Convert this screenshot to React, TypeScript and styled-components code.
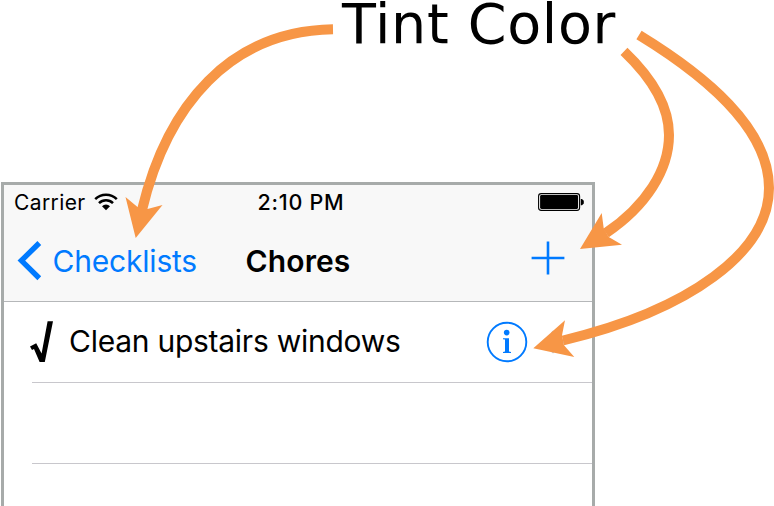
import React from "react";
import styled, { createGlobalStyle } from "styled-components";

const TINT = "#007aff";
const ARROW = "#f79646";

const GlobalStyle = createGlobalStyle`
  * { box-sizing: border-box; }
  body { margin: 0; background: #fff; }
`;

const Page = styled.main`
  position: relative;
  width: 774px;
  height: 506px;
  overflow: hidden;
  display: flex;
  flex-direction: column;
  align-items: flex-start;
  background: #fff;
  color: #000;
  font-family: Inter, "Liberation Sans", sans-serif;
`;

const Caption = styled.h1`
  flex: none;
  height: 182px;
  margin: 0 0 0 342px;
  font: 400 55.5px/48px "DejaVu Sans", sans-serif;
  letter-spacing: 0.7px;
  white-space: nowrap;
`;

const Phone = styled.section`
  flex: none;
  width: 594px;
  height: 324px;
  margin-left: 1px;
  border: 3px solid #a7abaa;
  border-bottom: 0;
  background: #fff;
`;

const Header = styled.header`
  height: 117px;
  background: #f8f8f8;
  border-bottom: 1px solid #b5b7b9;
`;

const StatusBar = styled.div`
  display: grid;
  grid-template-columns: 1fr auto 1fr;
  align-items: center;
  height: 34px;
  padding: 0 8px 0 10px;
`;

const Carrier = styled.div`
  display: flex;
  align-items: center;
  gap: 8.5px;
  font-size: 21px;
  letter-spacing: 0.4px;
`;

const Time = styled.div`
  position: relative;
  left: 2px;
  font-size: 21.5px;
  font-weight: 500;
  letter-spacing: 0.75px;
`;

const Battery = styled.svg`
  justify-self: end;
`;

const NavBar = styled.nav`
  display: grid;
  grid-template-columns: 1fr auto 1fr;
  align-items: center;
  height: 83px;
  padding: 0 13px;
`;

const BackButton = styled.button`
  display: flex;
  align-items: center;
  gap: 10.5px;
  padding: 0;
  border: 0;
  background: none;
  color: ${TINT};
  font: 400 30px/40px Inter, sans-serif;
  letter-spacing: -0.2px;
`;

const Title = styled.h2`
  margin: 0;
  font-size: 30px;
  line-height: 40px;
  font-weight: 600;
  letter-spacing: 0.1px;
`;

const AddButton = styled.button`
  display: flex;
  justify-self: end;
  margin: 0 14.5px 4.5px 0;
  padding: 0;
  border: 0;
  background: none;
  color: ${TINT};
`;

const List = styled.ul`
  margin: 0;
  padding: 0;
  list-style: none;
`;

const Row = styled.li`
  display: flex;
  align-items: center;
  height: 81px;
  margin-left: 28px;
  border-bottom: 1px solid #c8c7cc;
`;

const Check = styled.svg`
  flex: none;
  margin-left: -3px;
`;

const Label = styled.span`
  flex: 1;
  margin: 0 0 2px 15px;
  font-size: 30px;
  line-height: 40px;
  letter-spacing: -0.26px;
  white-space: nowrap;
`;

const Accessory = styled.svg`
  flex: none;
  margin-right: 26px;
`;

const Annotations = styled.svg`
  position: absolute;
  inset: 0;
  pointer-events: none;
`;

const arrows = [
  {
    shaft: "M333 29.3C230 31 167 105 142 210",
    head: "135.7,238 125.5,197 137.5,207 147.5,209 162.5,205",
  },
  {
    shaft: "M624 51.3C652 78 669 106 669 135C669 170 646 206 606 233",
    head: "580,249 601.7,213 603.7,228.3 608.7,237 622,244.7",
  },
  {
    shaft: "M639 35C706 76 769 128 769 188C769 252 690 310 563 340.5",
    head: "533.3,348.3 565,320.3 562,335.3 564,345.3 574.3,357",
  },
];

export default function App() {
  return (
    <>
      <GlobalStyle />
      <Page>
        <Caption>Tint Color</Caption>
        <Phone>
          <Header>
            <StatusBar>
              <Carrier>
                Carrier
                <svg width="24" height="18" viewBox="0 0 24 18" fill="none" stroke="#000" strokeWidth="2.5">
                  <path d="M1.2 6.2a15.3 15.3 0 0 1 21.6 0M5 10.1a9.9 9.9 0 0 1 14 0" />
                  <path d="M8 13.2a5.7 5.7 0 0 1 8 0L12 17.2Z" fill="#000" stroke="none" />
                </svg>
              </Carrier>
              <Time>2:10 PM</Time>
              <Battery width="46" height="18" viewBox="0 0 46 18">
                <rect x="0.6" y="0.6" width="41" height="16.8" rx="2.6" fill="#fff" stroke="#000" strokeWidth="1.1" />
                <rect x="2.1" y="2.1" width="38" height="13.8" rx="1.4" />
                <path d="M42.8 6h1.2l1.8 1.8v2.6L44 12.2h-1.2Z" />
              </Battery>
            </StatusBar>
            <NavBar>
              <BackButton>
                <svg width="25" height="40" viewBox="0 0 25 40" fill="none" stroke={TINT} strokeWidth="5.4">
                  <path d="M22.3 2 4.4 19.6 22.3 37.2" />
                </svg>
                Checklists
              </BackButton>
              <Title>Chores</Title>
              <AddButton aria-label="Add">
                <svg width="34" height="34" viewBox="0 0 34 34" fill="none" stroke="currentColor" strokeWidth="2.6">
                  <path d="M17 0.6v32.8M0.6 17h32.8" />
                </svg>
              </AddButton>
            </NavBar>
          </Header>
          <List>
            <Row>
              <Check width="25" height="42" viewBox="0 0 25 42">
                <path d="M1 25.5 7.2 22.2 12.6 32.4 18.6 0.2H24L15.8 41H10.6L5 28 3 29Z" />
              </Check>
              <Label>Clean upstairs windows</Label>
              <Accessory width="80" height="42" viewBox="0 0 80 42">
                <circle cx="21" cy="21" r="19.3" fill="none" stroke={TINT} strokeWidth="1.9" />
                <circle cx="20.7" cy="11.6" r="2.8" fill={TINT} />
                <path d="M17 17.2h6v13.4l2 .3v1.1h-8v-1.1l2-.3V18.6l-2-.3Z" fill={TINT} />
                <path d="M66 10.5 77 21 66 31.5" fill="none" stroke="#c7c7cc" strokeWidth="3" />
              </Accessory>
            </Row>
            <Row />
          </List>
        </Phone>
        <Annotations width="774" height="506" viewBox="0 0 774 506">
          {arrows.map((arrow) => (
            <g key={arrow.shaft}>
              <path d={arrow.shaft} fill="none" stroke={ARROW} strokeWidth="10" />
              <polygon points={arrow.head} fill={ARROW} />
            </g>
          ))}
        </Annotations>
      </Page>
    </>
  );
}
